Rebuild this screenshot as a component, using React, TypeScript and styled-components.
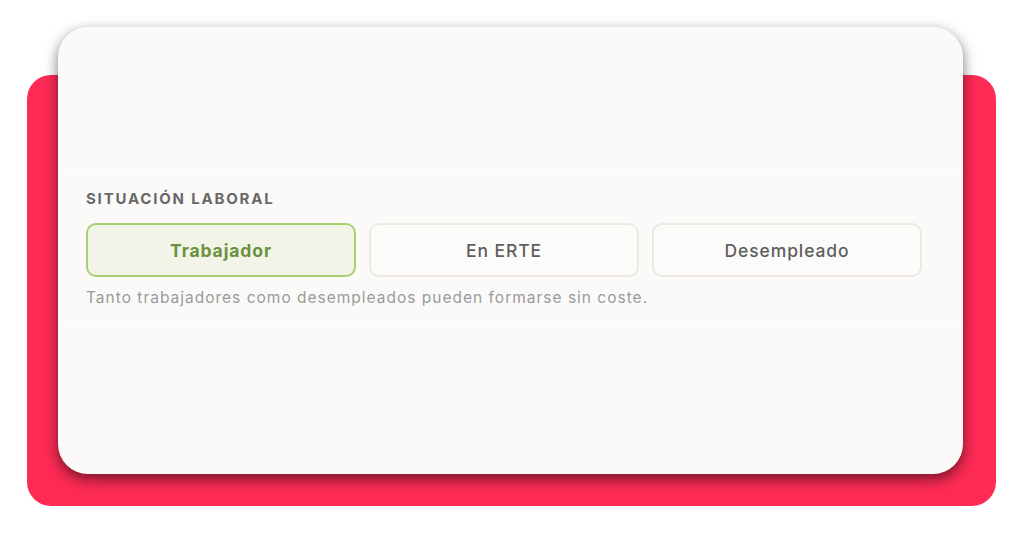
import React, { useState } from "react";
import styled, { createGlobalStyle } from "styled-components";

const Global = createGlobalStyle`
  html, body { margin: 0; padding: 0; background: #ffffff; }
  body { font-family: "Inter", "Noto Sans", "Liberation Sans", sans-serif; }
  * { box-sizing: border-box; }
`;

const Stage = styled.div`
  width: 1024px;
  height: 536px;
  padding: 27px 28px 30px 27px;
  display: grid;
  grid-template-columns: 969px;
  grid-template-rows: 479px;
`;

const Backdrop = styled.div`
  grid-area: 1 / 1;
  margin-top: 48px;
  width: 969px;
  height: 431px;
  background: #fe2b55;
  border-radius: 24px;
`;

const Card = styled.div`
  grid-area: 1 / 1;
  margin-left: 31px;
  width: 905px;
  height: 447px;
  background: #fbfaf9;
  border-radius: 30px;
  box-shadow: 0 5px 14px rgba(0, 0, 0, 0.55);
  padding-top: 145px;
  display: flex;
  flex-direction: column;
`;

const Section = styled.section`
  border-top: 1px solid #ffffff;
  border-bottom: 1px solid #ffffff;
  padding: 16px 41px 16px 28px;
  display: flex;
  flex-direction: column;
`;

const Label = styled.div`
  font-size: 15px;
  line-height: 20px;
  font-weight: 700;
  letter-spacing: 1.8px;
  color: #686868;
  text-transform: uppercase;
  margin-bottom: 14px;
`;

const Options = styled.div`
  display: grid;
  grid-template-columns: repeat(3, 1fr);
  gap: 13px;
`;

const Option = styled.button<{ $active?: boolean }>`
  height: 54px;
  border-radius: 10px;
  border: 2px solid ${(p) => (p.$active ? "#a9cf72" : "#ece9e4")};
  background: ${(p) => (p.$active ? "#f2f4e8" : "#fcfbfa")};
  color: ${(p) => (p.$active ? "#6b9140" : "#5e5e5e")};
  font-family: inherit;
  font-size: 17.5px;
  letter-spacing: 0.9px;
  font-weight: ${(p) => (p.$active ? 700 : 500)};
  cursor: pointer;
`;

const Hint = styled.p`
  margin: 11px 0 0;
  font-size: 15.5px;
  line-height: 20px;
  letter-spacing: 1px;
  color: #9a9a9a;
`;

const options = ["Trabajador", "En ERTE", "Desempleado"];

export default function App() {
  const [sel, setSel] = useState(0);
  return (
    <>
      <Global />
      <Stage>
        <Backdrop />
        <Card>
          <Section>
            <Label>Situación laboral</Label>
            <Options>
              {options.map((o, i) => (
                <Option key={o} $active={i === sel} onClick={() => setSel(i)}>
                  {o}
                </Option>
              ))}
            </Options>
            <Hint>Tanto trabajadores como desempleados pueden formarse sin coste.</Hint>
          </Section>
        </Card>
      </Stage>
    </>
  );
}
